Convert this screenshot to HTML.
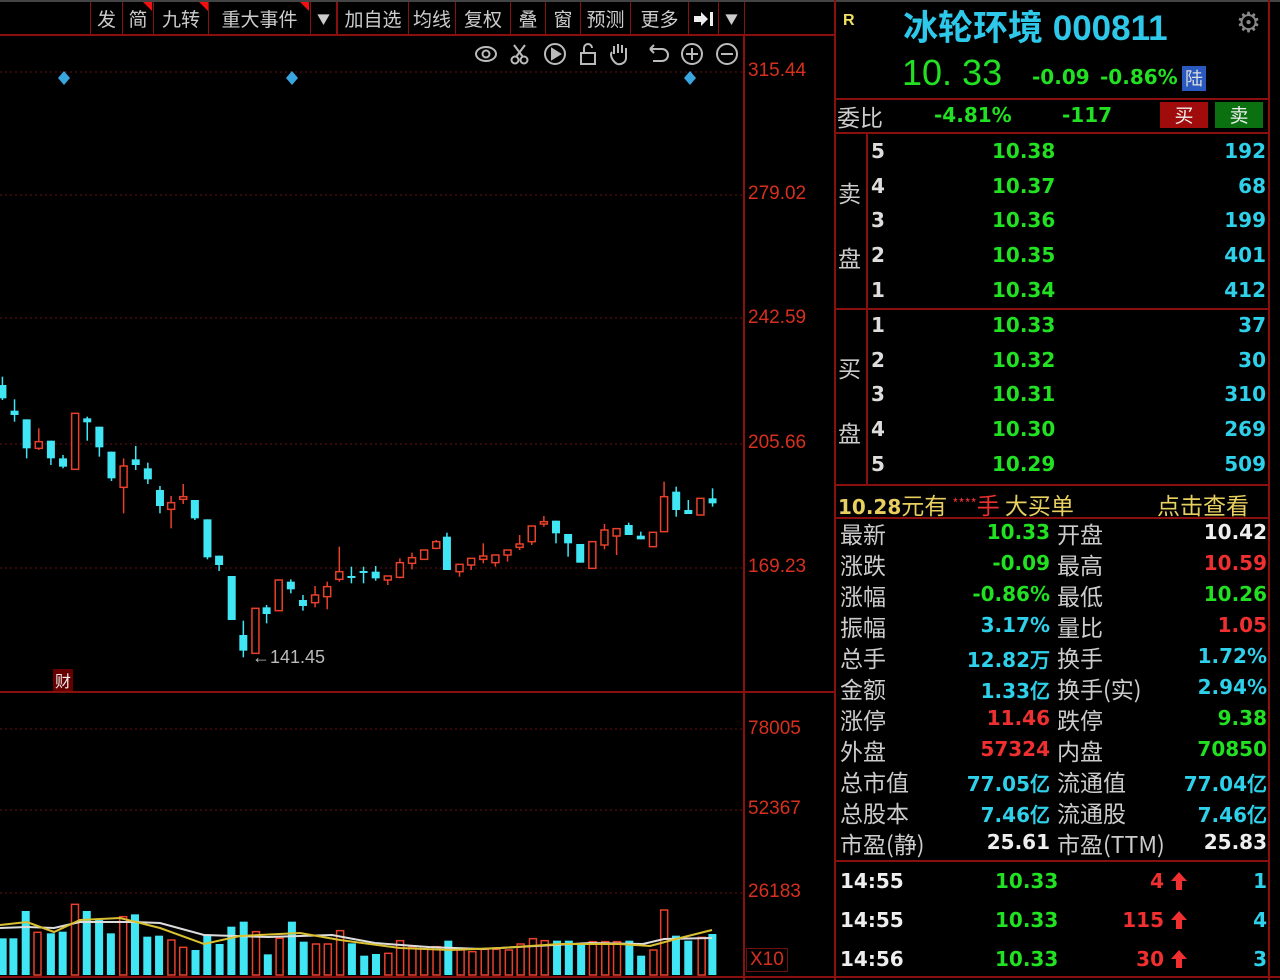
<!DOCTYPE html>
<html><head><meta charset="utf-8">
<style>
*{margin:0;padding:0;box-sizing:border-box}
body{width:1280px;height:980px;background:#000;overflow:hidden;position:relative;font-family:"Liberation Sans","Noto Sans CJK SC",sans-serif}
.a{position:absolute;white-space:nowrap}
.hl{position:absolute;height:2px;background:#8a1010}
.vl{position:absolute;width:2px;background:#8a1010}
.tb{position:absolute;top:2px;height:33px;color:#ccc;font-size:19px;line-height:33px;text-align:center;border-left:1px solid #8a1010;font-family:"Noto Sans CJK SC",sans-serif}
.tri{position:absolute;top:2px;width:0;height:0;border-top:9px solid #f01010;border-left:9px solid transparent}
.ax{position:absolute;color:#d8301e;font-size:19px;font-family:"Liberation Sans",sans-serif}
.g{color:#22e022}.c{color:#2ed0ea}.r{color:#f03030}.w{color:#eee}.y{color:#e8d060}.gr{color:#ccc}
.num{font-family:"DejaVu Sans","Liberation Sans",sans-serif;font-weight:bold;font-size:20px}
.lab{font-family:"Noto Sans CJK SC",sans-serif;color:#ccc;font-size:23px}
</style></head><body>
<div class="hl" style="left:0;top:0;width:1280px;height:2px;background:#444"></div>
<!-- toolbar -->
<div class="tb" style="left:90px;width:32px">发</div>
<div class="tb" style="left:122px;width:31px">简</div>
<div class="tb" style="left:153px;width:55px">九转</div>
<div class="tb" style="left:208px;width:102px">重大事件</div>
<div class="tb" style="left:310px;width:26px;font-size:13px">▼</div>
<div class="tb" style="left:336px;width:72px;border-left:2px solid #8a1010">加自选</div>
<div class="tb" style="left:408px;width:47px">均线</div>
<div class="tb" style="left:455px;width:55px">复权</div>
<div class="tb" style="left:510px;width:35px">叠</div>
<div class="tb" style="left:545px;width:35px">窗</div>
<div class="tb" style="left:580px;width:50px">预测</div>
<div class="tb" style="left:630px;width:58px">更多</div>
<div class="tb" style="left:688px;width:30px"><svg width="24" height="20" style="margin-top:7px"><path d="M2 7 H9 V3 L16 10 L9 17 V13 H2 Z" fill="#eee"/><rect x="18" y="3" width="3" height="14" fill="#eee"/></svg></div>
<div class="tb" style="left:718px;width:27px;font-size:13px;border-right:1px solid #8a1010">▼</div>
<div class="tri" style="left:143px"></div><div class="tri" style="left:199px"></div><div class="tri" style="left:300px"></div>
<div class="hl" style="left:0;top:34px;width:835px"></div>
<!-- icons -->
<svg class="a" style="left:470px;top:40px" width="270" height="28" viewBox="0 0 270 28" fill="none" stroke="#bbb" stroke-width="2">
<ellipse cx="16" cy="14" rx="10" ry="7"/><circle cx="16" cy="14" r="3.5"/>
<circle cx="45" cy="20" r="3.5"/><circle cx="54" cy="20" r="3.5"/><path d="M46 17 L55 5 M53 17 L44 5"/>
<circle cx="85" cy="14" r="10"/><path d="M82 9 L90 14 L82 19 Z" fill="#bbb"/>
<rect x="111" y="13" width="14" height="11"/><path d="M114 13 V8 a4 4 0 0 1 8 0"/>
<path d="M147 24 C141 20 140 14 142 12 M144 14 V6 M148 13 V4 M152 13 V5 M156 14 V8 V18 C156 22 152 25 147 24"/>
<path d="M180 9 H192 a6 6 0 0 1 0 12 H183 M180 9 l4 -4 M180 9 l4 4"/>
<circle cx="222" cy="14" r="10"/><path d="M216 14 H228 M222 8 V20"/>
<circle cx="257" cy="14" r="10"/><path d="M251 14 H263"/>
</svg>
<!-- grid -->
<svg class="a" style="left:0;top:0" width="745" height="980">
<g stroke="#6a1212" stroke-dasharray="2,3" stroke-width="1">
<line x1="0" y1="72" x2="743" y2="72"/><line x1="0" y1="195" x2="743" y2="195"/><line x1="0" y1="318" x2="743" y2="318"/><line x1="0" y1="444" x2="743" y2="444"/><line x1="0" y1="568" x2="743" y2="568"/>
<line x1="0" y1="729" x2="743" y2="729"/><line x1="0" y1="810" x2="743" y2="810"/><line x1="0" y1="893" x2="743" y2="893"/>
</g>
<g fill="#3aa6e0"><path d="M64 71 l6 7 -6 7 -6 -7z"/><path d="M292 71 l6 7 -6 7 -6 -7z"/><path d="M690 71 l6 7 -6 7 -6 -7z"/></g>
<g id="cd"></g><g id="vb"></g>
<polyline fill="none" stroke="#ddd" stroke-width="2" points="0,928 27,927 54,928 80,922 134,922 160,923 204,935 268,937 332,935 375,943 428,947 482,949 536,946 590,943 643,944 664,939 712,938"/>
<polyline fill="none" stroke="#d8c030" stroke-width="2" points="0,925 27,922 54,932 80,920 120,918 160,928 204,944 240,936 300,933 340,940 400,948 450,950 500,948 560,944 620,944 650,946 680,938 712,930"/>
</svg>
<div class="a" style="left:252px;top:647px;color:#bbb;font-size:18px">←141.45</div>
<div class="a" style="left:53px;top:669px;width:20px;height:22px;background:#600;color:#eee;font-size:16px;line-height:22px;text-align:center;font-family:'Noto Sans CJK SC',sans-serif">财</div>
<div class="hl" style="left:0;top:691px;width:835px"></div>
<div class="hl" style="left:0;top:976px;width:1280px"></div>
<div class="vl" style="left:743px;top:34px;height:946px"></div>
<!-- axis -->
<div class="ax" style="left:748px;top:60px">315.44</div>
<div class="ax" style="left:748px;top:183px">279.02</div>
<div class="ax" style="left:748px;top:307px">242.59</div>
<div class="ax" style="left:748px;top:432px">205.66</div>
<div class="ax" style="left:748px;top:556px">169.23</div>
<div class="ax" style="left:748px;top:718px">78005</div>
<div class="ax" style="left:748px;top:798px">52367</div>
<div class="ax" style="left:748px;top:881px">26183</div>
<div class="ax" style="left:746px;top:948px;border:1px solid #6a1212;padding:0 3px">X10</div>
<!-- right panel -->
<div class="vl" style="left:834px;top:0;height:980px"></div>
<div class="vl" style="left:1268px;top:0;height:980px"></div>
<div class="a" style="left:843px;top:12px;color:#f0e060;font-size:16px;font-weight:bold">R</div>
<div class="a" style="left:903px;top:0px;color:#2ec8ea;font-size:35px;font-weight:bold;font-family:'Liberation Sans','Noto Sans CJK SC',sans-serif">冰轮环境 000811</div>
<div class="a" style="left:1236px;top:6px;color:#888;font-size:28px">⚙</div>
<div class="a g" style="left:902px;top:52px;font-size:36px;font-family:'Liberation Sans',sans-serif">10. 33</div>
<div class="a g num" style="left:1032px;top:65px">-0.09</div>
<div class="a g num" style="left:1100px;top:65px">-0.86%</div>
<div class="a" style="left:1182px;top:66px;width:24px;height:25px;background:#2a5ac0;color:#ddd;font-size:18px;line-height:25px;text-align:center;font-family:'Noto Sans CJK SC',sans-serif">陆</div>
<div class="hl" style="left:834px;top:98px;width:436px"></div>
<div class="a lab" style="left:837px;top:99px">委比</div>
<div class="a g num" style="left:934px;top:103px">-4.81%</div>
<div class="a g num" style="left:1062px;top:103px">-117</div>
<div class="a" style="left:1160px;top:102px;width:48px;height:26px;background:#a00c0c;color:#eee;font-size:19px;line-height:26px;text-align:center;font-family:'Noto Sans CJK SC',sans-serif">买</div>
<div class="a" style="left:1215px;top:102px;width:48px;height:26px;background:#0b7010;color:#eee;font-size:19px;line-height:26px;text-align:center;font-family:'Noto Sans CJK SC',sans-serif">卖</div>
<div class="hl" style="left:834px;top:132px;width:436px"></div>
<div class="vl" style="left:866px;top:133px;height:352px"></div>
<div class="hl" style="left:834px;top:308px;width:436px"></div>
<div class="a lab" style="left:838px;top:175px">卖</div><div class="a lab" style="left:838px;top:240px">盘</div>
<div class="a lab" style="left:838px;top:350px">买</div><div class="a lab" style="left:838px;top:415px">盘</div>
<div id="ob"></div>
<div class="hl" style="left:834px;top:484px;width:436px"></div>
<div class="a" style="left:838px;top:487px;font-size:23px;font-family:'Noto Sans CJK SC',sans-serif"><span class="y" style="font-weight:bold;font-family:'DejaVu Sans',sans-serif;font-size:20px">10.28</span><span class="y">元有</span> <span class="r" style="font-size:13px;vertical-align:6px">****</span><span class="r">手</span> <span class="y">大买单</span></div>
<div class="a y" style="left:1157px;top:487px;font-size:23px;font-family:'Noto Sans CJK SC',sans-serif">点击查看</div>
<div class="hl" style="left:834px;top:517px;width:436px"></div>
<div id="st"></div>
<div class="hl" style="left:834px;top:860px;width:436px"></div>
<div id="tk"></div>
<script>
var C=[[5,45,85,20,90,0],[30,122,135,88,155,0],[55,148,235,148,265,0],[80,215,235,175,240,1],[105,212,265,212,285,0],[130,265,290,255,295,0],[155,130,298,130,298,1],[180,145,157,140,212,0],[205,170,232,170,260,0],[230,245,325,245,333,0],[255,288,352,265,430,1],[280,268,285,228,300,0],[305,295,328,278,342,0],[330,360,408,348,430,0],[353,398,418,378,475,1],[378,380,388,342,402,1],[402,390,445,390,450,0],[428,448,562,448,568,0],[452,557,585,557,603,0],[478,618,750,618,750,0],[502,795,842,752,862,0],[527,715,850,715,850,1],[550,712,732,705,760,0],[575,630,722,630,722,1],[600,635,658,628,670,0],[625,690,708,675,722,0],[650,675,698,648,712,1],[675,650,680,635,718,1],[700,605,628,530,635,1],[725,618,622,590,640,0],[750,603,608,590,640,0],[775,605,625,588,632,0],[800,618,630,618,645,1],[825,578,622,565,625,1],[850,563,580,548,598,1],[875,540,568,540,568,1],[900,515,535,510,538,1],[922,500,600,488,600,0],[948,583,605,583,620,1],[972,565,585,565,600,1],[997,558,568,520,580,1],[1022,555,578,555,590,1],[1047,540,555,540,575,1],[1072,522,532,495,540,1],[1097,468,515,468,525,1],[1122,455,462,438,470,1],[1147,452,490,452,520,0],[1172,492,520,492,560,0],[1197,522,578,522,578,0],[1222,515,595,515,595,1],[1247,480,525,462,538,1],[1272,476,498,476,555,1],[1297,465,495,458,495,0],[1322,497,508,485,508,0],[1347,487,530,487,530,1],[1370,380,485,335,485,1],[1395,365,420,350,440,0],[1420,420,432,390,432,0],[1445,385,435,385,435,1],[1470,385,400,355,410,0]];
var s='',sx=2.063;
C.forEach(function(d){var x=d[0]/sx,bt=370+d[1]/3,bb=370+d[2]/3,wt=370+d[3]/3,wb=370+d[4]/3;var col=d[5]?'#e8402a':'#40e6f4';
s+='<line x1="'+x+'" y1="'+wt+'" x2="'+x+'" y2="'+wb+'" stroke="'+col+'" stroke-width="1.5"/>';
var h=Math.max(bb-bt,2);
if(d[5])s+='<rect x="'+(x-3.5)+'" y="'+bt+'" width="7" height="'+h+'" fill="#000" stroke="'+col+'" stroke-width="1.5"/>';
else s+='<rect x="'+(x-4)+'" y="'+bt+'" width="8" height="'+h+'" fill="'+col+'"/>';});
document.getElementById('cd').innerHTML=s;
var V=[[5,0,745],[25,0,745],[48,0,663],[70,1,727],[95,0,730],[117,0,725],[140,1,643],[162,0,663],[185,0,690],[207,0,730],[230,1,680],[252,0,673],[275,0,740],[297,0,737],[320,1,750],[342,1,772],[365,0,780],[387,0,733],[410,0,762],[432,0,710],[455,0,695],[478,1,725],[500,0,793],[522,1,745],[545,0,695],[567,0,755],[590,1,762],[612,1,762],[635,1,722],[657,0,760],[680,0,797],[702,0,792],[725,1,790],[747,1,752],[770,1,770],[792,1,770],[815,1,770],[837,0,752],[860,1,780],[882,1,785],[905,1,778],[927,1,778],[950,1,780],[972,1,762],[995,1,746],[1017,1,752],[1040,0,752],[1062,0,752],[1085,0,765],[1107,1,755],[1130,1,755],[1152,1,755],[1175,0,752],[1197,0,797],[1220,1,780],[1240,1,660],[1262,0,737],[1285,0,752],[1310,1,742],[1330,0,732]];
s='';V.forEach(function(d){var x=d[0]/1.867,t=690+d[2]/3,h=975-t;
if(d[1])s+='<rect x="'+(x-3.5)+'" y="'+t+'" width="7" height="'+h+'" fill="none" stroke="#e8402a" stroke-width="1.5"/>';
else s+='<rect x="'+(x-4)+'" y="'+t+'" width="8" height="'+h+'" fill="#40e6f4"/>';});
document.getElementById('vb').innerHTML=s;
var ob=[[5,'10.38','192',152],[4,'10.37','68',187],[3,'10.36','199',221],[2,'10.35','401',256],[1,'10.34','412',291],[1,'10.33','37',326],[2,'10.32','30',361],[3,'10.31','310',395],[4,'10.30','269',430],[5,'10.29','509',465]];
s='';ob.forEach(function(o){var t=o[3]-13;s+='<div class="a num w" style="left:871px;top:'+t+'px;color:#ddd">'+o[0]+'</div><div class="a num g" style="left:992px;top:'+t+'px">'+o[1]+'</div><div class="a num c" style="right:14px;top:'+t+'px">'+o[2]+'</div>';});
document.getElementById('ob').innerHTML=s;
var st=[['最新','10.33','g','开盘','10.42','w'],['涨跌','-0.09','g','最高','10.59','r'],['涨幅','-0.86%','g','最低','10.26','g'],['振幅','3.17%','c','量比','1.05','r'],['总手','12.82万','c','换手','1.72%','c'],['金额','1.33亿','c','换手(实)','2.94%','c'],['涨停','11.46','r','跌停','9.38','g'],['外盘','57324','r','内盘','70850','g'],['总市值','77.05亿','c','流通值','77.04亿','c'],['总股本','7.46亿','c','流通股','7.46亿','c'],['市盈(静)','25.61','w','市盈(TTM)','25.83','w']];
s='';st.forEach(function(r,i){var t=520+i*31;
s+='<div class="a lab" style="left:840px;top:'+(t-4)+'px">'+r[0]+'</div><div class="a num '+r[2]+'" style="right:230px;top:'+t+'px">'+r[1]+'</div><div class="a lab" style="left:1057px;top:'+(t-4)+'px">'+r[3]+'</div><div class="a num '+r[5]+'" style="right:13px;top:'+t+'px">'+r[4]+'</div>';});
document.getElementById('st').innerHTML=s;
var tk=[['14:55','4','1',882],['14:55','115','4',921],['14:56','30','3',960]];
s='';tk.forEach(function(k){var t=k[3]-13;s+='<div class="a num w" style="left:840px;top:'+t+'px">'+k[0]+'</div><div class="a num g" style="left:995px;top:'+t+'px">10.33</div><div class="a num r" style="right:116px;top:'+t+'px">'+k[1]+'</div><svg class="a" style="left:1170px;top:'+(t+2)+'px" width="18" height="20"><path d="M9 1 L17 10 H12 V19 H6 V10 H1 Z" fill="#f03030"/></svg><div class="a num c" style="right:13px;top:'+t+'px">'+k[2]+'</div>';});
document.getElementById('tk').innerHTML=s;
</script>
</body></html>
